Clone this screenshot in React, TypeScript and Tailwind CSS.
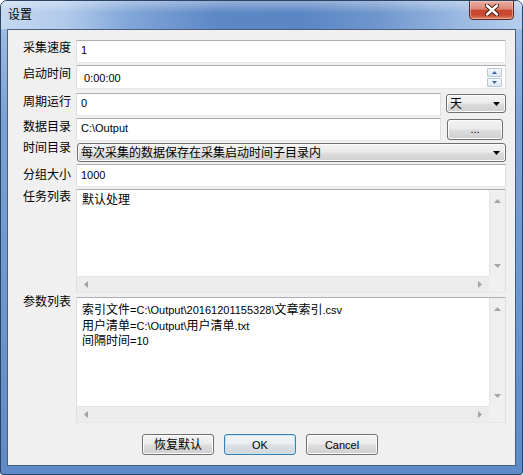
import React from "react";

const FONT = "[font-family:'Liberation_Sans','Noto_Sans_CJK_SC',sans-serif]";

function T({ s }: { s: string }) {
  const parts = s.split(/([\u3000-\u9fff\uff00-\uffef]+)/).filter((p) => p.length > 0);
  return (
    <>
      {parts.map((p, i) =>
        /[\u3000-\u9fff\uff00-\uffef]/.test(p) ? (
          <span key={i} className="text-[12px]">
            {p}
          </span>
        ) : (
          <span key={i} className="text-[11px]">
            {p}
          </span>
        )
      )}
    </>
  );
}

function Label({ text, cls }: { text: string; cls: string }) {
  return <div className={`w-[53px] shrink-0 text-[12px] leading-[14px] text-black ${cls}`}>{text}</div>;
}

const inputCls =
  "bg-white border border-t-[#abadb3] border-l-[#dbdfe6] border-r-[#dbdfe6] border-b-[#e3e9ef]";

function Arrow({ dir }: { dir: "up" | "down" | "left" | "right" }) {
  const d =
    dir === "up"
      ? "M0 4 L3.5 0 L7 4 Z"
      : dir === "down"
      ? "M0 0 L7 0 L3.5 4 Z"
      : dir === "left"
      ? "M4 0 L4 7 L0 3.5 Z"
      : "M0 0 L4 3.5 L0 7 Z";
  const w = dir === "up" || dir === "down" ? 7 : 4;
  const h = dir === "up" || dir === "down" ? 4 : 7;
  return (
    <svg width={w} height={h} viewBox={`0 0 ${w} ${h}`}>
      <path d={d} fill="#a3a3a3" />
    </svg>
  );
}

function ScrollBox({ children }: { children: React.ReactNode }) {
  return (
    <div className={`flex-1 flex flex-col ${inputCls}`}>
      <div className="flex-1 flex min-h-0">
        <div className="flex-1 pl-[5px] pt-[3px] text-black">{children}</div>
        <div className="w-[16px] flex flex-col bg-[#efefef] border-l border-[#e6e6e6]">
          <div className="h-[19px] flex items-center justify-center pt-[2px]">
            <Arrow dir="up" />
          </div>
          <div className="flex-1" />
          <div className="h-[19px] flex items-center justify-center pb-[2px]">
            <Arrow dir="down" />
          </div>
        </div>
      </div>
      <div className="h-[16px] flex">
        <div className="flex-1 flex items-center justify-between bg-[#ececec] border-t border-[#e4e4e4] px-[7px]">
          <Arrow dir="left" />
          <Arrow dir="right" />
        </div>
        <div className="w-[16px] bg-[#f0f0f0]" />
      </div>
    </div>
  );
}

const comboBg =
  "bg-[linear-gradient(180deg,#f3f3f3_0%,#ebebeb_48%,#dddddd_52%,#cfcfcf_100%)] border border-[#707070] rounded-[3px] shadow-[inset_0_0_0_1px_#fbfbfb]";

function ComboArrow() {
  return (
    <svg width="7" height="4" viewBox="0 0 7 4">
      <path d="M0 0 L7 0 L3.5 4 Z" fill="#000" />
    </svg>
  );
}

export default function App() {
  return (
    <div className={`w-[523px] h-[475px] bg-white ${FONT}`}>
      <div className="w-full h-full rounded-t-[7px] rounded-b-[3px] border border-[#2c4463] bg-[linear-gradient(180deg,#a7c3e9_0%,#7aa1d6_25%,#6a94cf_70%,#5f8ac8_100%)] flex flex-col overflow-hidden">
        {/* title bar */}
        <div className="h-[28px] shrink-0 relative bg-[linear-gradient(90deg,#c4d8f0_0%,#b2cbeb_12%,#80a5d8_25%,#5c87c5_42%,#5a86c4_58%,#6f96cd_72%,#9ab8e2_88%,#b7cfee_100%)]">
          <div className="absolute inset-x-0 top-0 h-[12px] bg-[linear-gradient(180deg,rgba(255,255,255,0.35),rgba(255,255,255,0))]" />
          <span className="absolute left-[7px] top-[7px] text-[12px] leading-[14px] text-black">设置</span>
          <div className="absolute right-[8px] top-[-1px] w-[45px] h-[20px] rounded-b-[4px] border border-[#5c2a22] bg-[linear-gradient(180deg,#eab0a3_0%,#dd8675_45%,#c8462f_52%,#c9492f_78%,#e0866a_100%)] shadow-[inset_0_0_0_1px_rgba(255,210,200,0.5)] flex items-center justify-center">
            <svg width="14" height="12" viewBox="0 0 14 12">
              <path d="M2 1.5 L12 10.5 M12 1.5 L2 10.5" stroke="#4a1a14" strokeWidth="4.4" strokeLinecap="round" />
              <path d="M2 1.5 L12 10.5 M12 1.5 L2 10.5" stroke="#ffffff" strokeWidth="2.4" strokeLinecap="round" />
            </svg>
          </div>
        </div>
        {/* body frame */}
        <div className="flex-1 flex px-[6px] pb-[8px]">
          <div className="flex-1 border border-[#485f80] bg-[#f0f0f0] flex flex-col pl-[15px] pr-[9px] pt-[10px]">
            {/* row1 */}
            <div className="flex h-[23px]">
              <Label text="采集速度" cls="pt-[1px]" />
              <div className={`flex-1 flex items-center pl-[4px] pb-[2px] ${inputCls}`}>
                <T s="1" />
              </div>
            </div>
            {/* row2 */}
            <div className="flex h-[24px] mt-[2px]">
              <Label text="启动时间" cls="pt-[2px]" />
              <div className={`flex-1 flex items-center pl-[7px] ${inputCls}`}>
                <div className="flex-1">
                  <T s="0:00:00" />
                </div>
                <div className="flex flex-col gap-[1px] mr-[3px]">
                  <div className="w-[15px] h-[9px] border border-[#b9c7da] rounded-[1px] bg-[linear-gradient(180deg,#f7fafd,#dde6f1)] flex items-center justify-center">
                    <svg width="5" height="3" viewBox="0 0 5 3">
                      <path d="M0 3 L2.5 0 L5 3 Z" fill="#3f64a6" />
                    </svg>
                  </div>
                  <div className="w-[15px] h-[9px] border border-[#b9c7da] rounded-[1px] bg-[linear-gradient(180deg,#f7fafd,#dde6f1)] flex items-center justify-center">
                    <svg width="5" height="3" viewBox="0 0 5 3">
                      <path d="M0 0 L5 0 L2.5 3 Z" fill="#3f64a6" />
                    </svg>
                  </div>
                </div>
              </div>
            </div>
            {/* row3 */}
            <div className="flex h-[23px] mt-[4px]">
              <Label text="周期运行" cls="pt-[2px]" />
              <div className={`flex-1 flex items-center pl-[4px] pb-[2px] ${inputCls}`}>
                <T s="0" />
              </div>
              <div className={`ml-[5px] w-[60px] h-[19px] mt-[1px] flex items-center justify-between pl-[3px] pr-[5px] ${comboBg}`}>
                <span className="text-[12px] leading-[14px] text-black">天</span>
                <ComboArrow />
              </div>
            </div>
            {/* row4 */}
            <div className="flex h-[23px] mt-[2px]">
              <Label text="数据目录" cls="pt-[2px]" />
              <div className={`flex-1 flex items-center pl-[4px] pb-[2px] ${inputCls}`}>
                <T s="C:\Output" />
              </div>
              <div className={`ml-[6px] mr-[3px] w-[56px] h-[21px] mt-[1px] flex items-center justify-center pb-[2px] ${comboBg}`}>
                <span className="text-[11px] leading-[12px] text-black">...</span>
              </div>
            </div>
            {/* row5 */}
            <div className="flex h-[19px] mt-[2px]">
              <Label text="时间目录" cls="-mt-[2px]" />
              <div className={`flex-1 ml-[1px] flex items-center justify-between pl-[3px] pr-[5px] ${comboBg}`}>
                <span className="text-[12px] leading-[14px] text-black">每次采集的数据保存在采集启动时间子目录内</span>
                <ComboArrow />
              </div>
            </div>
            {/* row6 */}
            <div className="flex h-[23px] mt-[2px]">
              <Label text="分组大小" cls="pt-[4px]" />
              <div className={`flex-1 flex items-center pl-[4px] pb-[1px] ${inputCls}`}>
                <T s="1000" />
              </div>
            </div>
            {/* task list */}
            <div className="flex h-[104px] mt-[2px]">
              <Label text="任务列表" cls="pt-[1px]" />
              <ScrollBox>
                <div className="text-[12px] leading-[14px]">默认处理</div>
              </ScrollBox>
            </div>
            {/* param list */}
            <div className="flex h-[126px] mt-[4px]">
              <Label text="参数列表" cls="-mt-[2px]" />
              <ScrollBox>
                <div className="leading-[13.5px] pt-[1px]">
                  <div>
                    <T s="索引文件=C:\Output\20161201155328\文章索引.csv" />
                  </div>
                  <div>
                    <T s="用户清单=C:\Output\用户清单.txt" />
                  </div>
                  <div>
                    <T s="间隔时间=10" />
                  </div>
                </div>
              </ScrollBox>
            </div>
            {/* buttons */}
            <div className="flex h-[21px] mt-[11px] ml-[119px] gap-[10px]">
              <div className={`w-[72px] flex items-center justify-center ${comboBg}`}>
                <span className="text-[12px] leading-[14px] text-black">恢复默认</span>
              </div>
              <div className="w-[72px] flex items-center justify-center rounded-[3px] border border-[#3c7fb1] shadow-[inset_0_0_0_1px_#bfe6fa] bg-[linear-gradient(180deg,#f3f5f7_0%,#ebeef1_48%,#dcdfe3_52%,#d2d6da_100%)]">
                <span className="text-[11px] leading-[12px] text-black">OK</span>
              </div>
              <div className={`w-[72px] flex items-center justify-center ${comboBg}`}>
                <span className="text-[11px] leading-[12px] text-black">Cancel</span>
              </div>
            </div>
          </div>
        </div>
      </div>
    </div>
  );
}
